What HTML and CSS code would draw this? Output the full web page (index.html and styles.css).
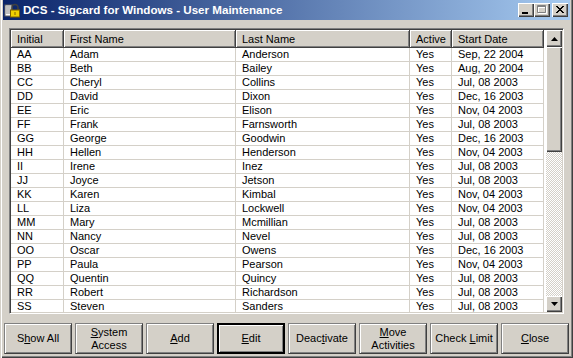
FILE: index.html
```html
<!DOCTYPE html>
<html lang="en">
<head>
    <meta charset="UTF-8">
    <meta name="viewport" content="width=device-width, initial-scale=1.0">
    <title>User Maintenance</title>
    <link rel="stylesheet" href="styles.css">
</head>
<body>
    <div class="window">
        <!-- 标题栏 -->
        <div class="titlebar">
            <svg class="app-icon" width="16" height="16" viewBox="0 0 16 16">
                <rect x="1" y="3" width="7" height="11" fill="#fff" stroke="#606060"/>
                <path d="M2 5h5M2 7h5M2 9h5M2 11h5" stroke="#808080"/>
                <path d="M8 8V5.5a3 3 0 0 1 6 0V8" fill="none" stroke="#404040" stroke-width="1.5"/>
                <rect x="6.5" y="8" width="9" height="7" fill="#f0d000" stroke="#806000"/>
                <rect x="10.5" y="10" width="1" height="3" fill="#806000"/>
            </svg>
            <span class="title">DCS - Sigcard for Windows - User Maintenance</span>
            <div class="controls">
                <span class="ctl">
                    <svg width="8" height="8" viewBox="0 0 8 8"><rect x="0" y="6" width="6" height="2" fill="#000"/></svg>
                </span>
                <span class="ctl">
                    <svg width="10" height="9" viewBox="0 0 10 9">
                        <path d="M1.5 1.5h8v7h-8z M1.5 2.5h8" fill="none" stroke="#fff"/>
                        <path d="M0.5 0.5h8v7h-8z M0.5 1.5h8" fill="none" stroke="#808080"/>
                    </svg>
                </span>
                <span class="ctl close">
                    <svg width="8" height="7" viewBox="0 0 8 7"><path d="M0 0l7 7M1 0l7 7M7 0l-7 7M8 0l-7 7" stroke="#000"/></svg>
                </span>
            </div>
        </div>

        <!-- 表格区 -->
        <div class="grid-frame">
            <div class="grid-body">
                <table class="users">
                    <colgroup>
                        <col class="c-initial">
                        <col class="c-first">
                        <col class="c-last">
                        <col class="c-active">
                        <col class="c-date">
                    </colgroup>
                    <thead>
                        <tr><th>Initial</th><th>First Name</th><th>Last Name</th><th>Active</th><th>Start Date</th></tr>
                    </thead>
                    <tbody>
                        <tr><td>AA</td><td>Adam</td><td>Anderson</td><td>Yes</td><td>Sep, 22 2004</td></tr>
                        <tr><td>BB</td><td>Beth</td><td>Bailey</td><td>Yes</td><td>Aug, 20 2004</td></tr>
                        <tr><td>CC</td><td>Cheryl</td><td>Collins</td><td>Yes</td><td>Jul, 08 2003</td></tr>
                        <tr><td>DD</td><td>David</td><td>Dixon</td><td>Yes</td><td>Dec, 16 2003</td></tr>
                        <tr><td>EE</td><td>Eric</td><td>Elison</td><td>Yes</td><td>Nov, 04 2003</td></tr>
                        <tr><td>FF</td><td>Frank</td><td>Farnsworth</td><td>Yes</td><td>Jul, 08 2003</td></tr>
                        <tr><td>GG</td><td>George</td><td>Goodwin</td><td>Yes</td><td>Dec, 16 2003</td></tr>
                        <tr><td>HH</td><td>Hellen</td><td>Henderson</td><td>Yes</td><td>Nov, 04 2003</td></tr>
                        <tr><td>II</td><td>Irene</td><td>Inez</td><td>Yes</td><td>Jul, 08 2003</td></tr>
                        <tr><td>JJ</td><td>Joyce</td><td>Jetson</td><td>Yes</td><td>Jul, 08 2003</td></tr>
                        <tr><td>KK</td><td>Karen</td><td>Kimbal</td><td>Yes</td><td>Nov, 04 2003</td></tr>
                        <tr><td>LL</td><td>Liza</td><td>Lockwell</td><td>Yes</td><td>Nov, 04 2003</td></tr>
                        <tr><td>MM</td><td>Mary</td><td>Mcmillian</td><td>Yes</td><td>Jul, 08 2003</td></tr>
                        <tr><td>NN</td><td>Nancy</td><td>Nevel</td><td>Yes</td><td>Jul, 08 2003</td></tr>
                        <tr><td>OO</td><td>Oscar</td><td>Owens</td><td>Yes</td><td>Dec, 16 2003</td></tr>
                        <tr><td>PP</td><td>Paula</td><td>Pearson</td><td>Yes</td><td>Nov, 04 2003</td></tr>
                        <tr><td>QQ</td><td>Quentin</td><td>Quincy</td><td>Yes</td><td>Jul, 08 2003</td></tr>
                        <tr><td>RR</td><td>Robert</td><td>Richardson</td><td>Yes</td><td>Jul, 08 2003</td></tr>
                        <tr><td>SS</td><td>Steven</td><td>Sanders</td><td>Yes</td><td>Jul, 08 2003</td></tr>
                    </tbody>
                </table>
            </div>
            <div class="scrollbar">
                <span class="sb-btn up">
                    <svg width="7" height="4" viewBox="0 0 7 4"><path d="M3.5 0L7 4H0z" fill="#000"/></svg>
                </span>
                <span class="sb-thumb"></span>
                <span class="sb-track"></span>
                <span class="sb-btn down">
                    <svg width="7" height="4" viewBox="0 0 7 4"><path d="M0 0h7L3.5 4z" fill="#000"/></svg>
                </span>
            </div>
        </div>

        <!-- 按钮栏 -->
        <div class="buttons">
            <button class="btn">S<u>h</u>ow All</button>
            <button class="btn"><u>S</u>ystem<br>Access</button>
            <button class="btn"><u>A</u>dd</button>
            <button class="btn default"><u>E</u>dit</button>
            <button class="btn">Deac<u>t</u>ivate</button>
            <button class="btn"><u>M</u>ove<br>Activities</button>
            <button class="btn">Check <u>L</u>imit</button>
            <button class="btn"><u>C</u>lose</button>
        </div>
    </div>
</body>
</html>
```

FILE: styles.css
```css
*{
    margin: 0;
    padding: 0;
    box-sizing: border-box;
}
body{
    background-color: #d4d0c8;
    font-family: "Liberation Sans", Arial, sans-serif;
    font-size: 11px;
    color: #000;
}
.window{
    width: 573px;
    height: 358px;
    padding: 0 3px 3px 3px;
    display: flex;
    flex-direction: column;
    background-color: #d4d0c8;
    box-shadow: inset 1px 0 #d4d0c8, inset 2px 0 #fff, inset -1px -1px #404040, inset -2px -2px #808080;
}

/* 标题栏 */
.titlebar{
    height: 20px;
    display: flex;
    align-items: center;
    background: linear-gradient(to right, #0a246a, #a6caf0);
    padding: 0 2px 1px 1px;
}
.app-icon{
    flex: none;
}
.title{
    margin-left: 3px;
    color: #fff;
    font-weight: bold;
    font-size: 11.6px;
    white-space: nowrap;
}
.controls{
    margin-left: auto;
    display: flex;
}
.ctl{
    width: 16px;
    height: 14px;
    display: flex;
    align-items: center;
    justify-content: center;
    background-color: #d4d0c8;
    box-shadow: inset 1px 1px #fff, inset -1px -1px #404040, inset -2px -2px #808080;
}
.ctl.close{
    margin-left: 2px;
}

/* 表格 */
.grid-frame{
    margin: 8px 0 0 6px;
    width: 555px;
    height: 286px;
    display: flex;
    border: 1px solid;
    border-color: #808080 #fff #fff #808080;
    box-shadow: inset 1px 1px #404040, inset -1px -1px #d4d0c8;
    padding: 1px;
}
.grid-body{
    flex: 1;
    background-color: #fff;
    overflow: hidden;
}
.users{
    table-layout: fixed;
    border-collapse: separate;
    border-spacing: 0;
    width: 533px;
}
.c-initial{ width: 53px; }
.c-first{ width: 172px; }
.c-last{ width: 174px; }
.c-active{ width: 42px; }
.c-date{ width: 92px; }
.users th{
    height: 18px;
    text-align: left;
    font-weight: normal;
    padding: 0 0 0 6px;
    background-color: #d4d0c8;
    border-right: 1px solid #404040;
    border-bottom: 1px solid #404040;
    box-shadow: inset 1px 1px #fff, inset -1px -1px #808080;
    white-space: nowrap;
    overflow: hidden;
}
.users td{
    height: 14px;
    line-height: 13px;
    padding: 0 0 0 6px;
    border-right: 1px solid #d4d0c8;
    border-bottom: 1px solid #d4d0c8;
    white-space: nowrap;
    overflow: hidden;
}

/* 滚动条 */
.scrollbar{
    width: 16px;
    display: flex;
    flex-direction: column;
}
.sb-btn,
.sb-thumb{
    background-color: #d4d0c8;
    box-shadow: inset 1px 1px #fff, inset -1px -1px #404040, inset -2px -2px #808080;
}
.sb-btn{
    height: 16px;
    display: flex;
    align-items: center;
    justify-content: center;
}
.sb-btn.up{
    height: 17px;
}
.sb-thumb{
    height: 105px;
}
.sb-track{
    flex: 1;
    background: repeating-conic-gradient(#d4d0c8 0 25%, #fff 0 50%) 0 0 / 2px 2px;
}

/* 按钮 */
.buttons{
    margin: 9px 0 0 1px;
    display: flex;
    gap: 3px;
}
.btn{
    width: 68px;
    height: 31px;
    font-family: inherit;
    font-size: 11px;
    line-height: 13px;
    color: #000;
    background-color: #d4d0c8;
    border: 1px solid;
    border-color: #808080 #404040 #404040 #808080;
    box-shadow: inset 1px 1px #fff, inset -1px -1px #808080;
}
.btn.default{
    border: 2px solid #000;
    box-shadow: inset 1px 1px #fff, inset -1px -1px #808080;
}
```
